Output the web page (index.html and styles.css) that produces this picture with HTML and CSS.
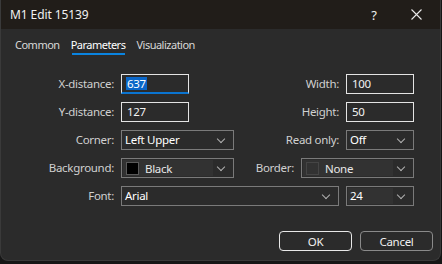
FILE: index.html
```html
<!DOCTYPE html>
<html>
<head>
<meta charset="utf-8">
<link rel="stylesheet" href="styles.css">
</head>
<body>
<div class="window">
  <div class="titlebar">
    <span class="title">M1 Edit 15139</span>
    <span class="help">?</span>
    <span class="close"><svg width="11" height="11" viewBox="0 0 11 11"><path d="M0.5 0.5 L10.5 10.5 M10.5 0.5 L0.5 10.5" stroke="#e8e8e8" stroke-width="1.1" fill="none"/></svg></span>
  </div>
  <div class="tabs">
    <span class="tab">Common</span>
    <span class="tab active">Parameters</span>
    <span class="tab">Visualization</span>
  </div>
  <div class="form">
    <label class="lbl">X-distance:</label>
    <div class="cell"><div class="input focused"><span class="sel">637</span></div></div>
    <label class="lbl">Width:</label>
    <div class="input">100</div>

    <label class="lbl">Y-distance:</label>
    <div class="cell"><div class="input">127</div></div>
    <label class="lbl">Height:</label>
    <div class="input">50</div>

    <label class="lbl">Corner:</label>
    <div class="select"><span class="val">Left Upper</span><span class="chev"></span></div>
    <label class="lbl">Read only:</label>
    <div class="select"><span class="val">Off</span><span class="chev"></span></div>

    <label class="lbl">Background:</label>
    <div class="select"><span class="inner"><span class="swatch black"></span><span class="cname">Black</span></span><span class="chev"></span></div>
    <div class="pair">
      <label class="lbl">Border:</label>
      <div class="select wide"><span class="inner"><span class="swatch none"></span><span class="cname">None</span></span><span class="chev"></span></div>
    </div>

    <label class="lbl">Font:</label>
    <div class="select span2"><span class="val">Arial</span><span class="chev"></span></div>
    <div class="select"><span class="inner short"><span class="val">24</span></span><span class="chev"></span></div>
  </div>
  <div class="buttons">
    <button class="btn primary">OK</button>
    <button class="btn">Cancel</button>
  </div>
</div>
</body>
</html>
```
FILE: styles.css
```css
* { box-sizing: border-box; }
html, body { margin: 0; padding: 0; }
body {
  width: 442px;
  height: 264px;
  background: #161616;
  font-family: "Noto Sans", sans-serif;
  font-size: 11.5px;
  letter-spacing: -0.3px;
  overflow: hidden;
}
.window {
  width: 441px;
  height: 261px;
  background: #2b2b2b;
  border: 1px solid #3a3a3a;
  border-top: none;
  border-radius: 0 0 8px 8px;
  overflow: hidden;
  display: flex;
  flex-direction: column;
}
.titlebar {
  height: 29px;
  background: #211d19;
  display: flex;
  align-items: center;
  padding-left: 9px;
  color: #f0f0f0;
  flex-shrink: 0;
}
.title { flex: 1; font-size: 12px; letter-spacing: -0.1px; }
.help { font-size: 13px; width: 14px; text-align: center; margin-right: 30px; }
.close { width: 11px; height: 11px; display: flex; margin-right: 18px; }
.tabs {
  display: flex;
  gap: 11px;
  padding: 8px 0 0 14px;
  height: 33px;
  flex-shrink: 0;
  font-size: 11px;
  letter-spacing: -0.5px;
}
.tab {
  color: #d8d8d8;
  height: 18px;
  line-height: 16px;
  position: relative;
}
.tab.active { color: #ffffff; }
.tab.active::after {
  content: "";
  position: absolute;
  left: 1px; right: 0;
  bottom: 0;
  height: 2px;
  background: #0a84e0;
}
.form {
  display: grid;
  grid-template-columns: 113px 113px 98px 68px;
  column-gap: 7px;
  row-gap: 8px;
  grid-auto-rows: 20px;
  padding-top: 12px;
}
.lbl {
  color: #d0d0d0;
  text-align: right;
  line-height: 20px;
  white-space: nowrap;
}
.cell { display: flex; }
.input {
  width: 68px;
  height: 20px;
  border: 1px solid #e4e4e4;
  color: #f2f2f2;
  padding-left: 5px;
  line-height: 17px;
}
.input.focused { border-bottom: 2px solid #0a74d0; padding-left: 4px; }
.sel { background: #0a66c8; color: #fff; padding: 0 1px; display: inline-block; line-height: 13px; margin-top: 2px; }
.select {
  height: 20px;
  border: 1px solid #7a7a7a;
  display: flex;
  align-items: center;
  color: #ffffff;
  position: relative;
}
.select .val { flex: 1; padding-left: 3px; line-height: 18px; }
.select .inner {
  flex: 1;
  align-self: stretch;
  margin: 1px 0 1px 1px;
  background: #323232;
  display: flex;
  align-items: center;
}
.select .inner.short .val { padding-left: 2px; }
.swatch {
  width: 13px;
  height: 13px;
  margin-left: 3px;
  border: 1px solid #5a5a5a;
}
.swatch.black { background: #000; }
.swatch.none { background: transparent; border-color: #454545; }
.cname { margin-left: 6px; color: #e8e8e8; }
.chev {
  width: 20px;
  height: 18px;
  flex-shrink: 0;
  position: relative;
}
.chev::before {
  content: "";
  position: absolute;
  left: 5px;
  top: 5px;
  width: 5px;
  height: 5px;
  border-right: 1px solid #b0b0b0;
  border-bottom: 1px solid #b0b0b0;
  transform: rotate(45deg);
}
.span2 { grid-column: 2 / 4; }
.pair {
  grid-column: 3 / 5;
  display: flex;
  justify-content: flex-end;
  gap: 7px;
}
.select.wide { width: 113px; }
.buttons {
  margin-top: auto;
  display: flex;
  justify-content: flex-end;
  gap: 8px;
  padding: 0 7px 9px 0;
}
.btn {
  width: 73px;
  height: 20px;
  background: #2b2b2b;
  border: 1px solid #8a8a8a;
  border-radius: 4px;
  color: #f0f0f0;
  font-family: "Noto Sans", sans-serif;
  font-size: 11.5px;
  letter-spacing: -0.3px;
  padding: 0;
  line-height: 17px;
}
.btn.primary { border-color: #e8e8e8; }
```
